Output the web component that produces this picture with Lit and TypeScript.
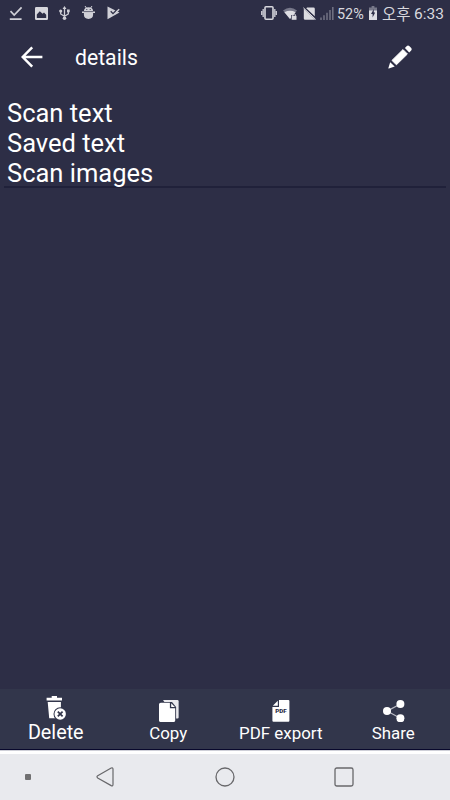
import { LitElement, html, css, svg } from "lit";
import { customElement, property } from "lit/decorators.js";

const glyphs: Record<string, { w: number; h: number; art: unknown }> = {
  check: { w: 14, h: 16, art: svg`<path d="M1.5 6.2 5.2 10 12.6 2.4M.8 14.2H12.6" fill="none" stroke="#cfcfd6" stroke-width="1.7"/>` },
  image: { w: 13, h: 13, art: svg`<path fill-rule="evenodd" fill="#d6d6dc" d="M1.2 0H11.8Q13 0 13 1.2V11.8Q13 13 11.8 13H1.2Q0 13 0 11.8V1.2Q0 0 1.2 0ZM1.8 11H11.2V7.8L9 5.5 7.6 6.8 4.8 4.2 1.8 7.6Z"/>` },
  usb: { w: 11, h: 14, art: svg`<g fill="none" stroke="#cfcfd6" stroke-width="1.3"><path d="M5.5 2V12M1.7 5V8L5.5 10.3 9.3 8V5"/></g><g fill="#cfcfd6"><path d="M5.5 0 7.5 3H3.5ZM8 3.5H10.7V6.3H8Z"/><circle cx="1.7" cy="5" r="1.6"/><circle cx="5.5" cy="12.2" r="1.8"/></g>` },
  robot: { w: 13, h: 14, art: svg`<g fill="#d0d0d7"><path d="M1.9 5.2Q2 1.2 6.5 1.2T11.1 5.2ZM1.9 6.2H11.1V8.6Q11.1 12.9 6.5 12.9T1.9 8.6ZM0 5.5H13V7H0Z"/><path d="M3 0 4.6 2.4M10 0 8.4 2.4" stroke="#d0d0d7"/></g><path d="M2 5.6H11" stroke="#2d2e46" stroke-width=".5"/><g fill="#2d2e46"><circle cx="4.8" cy="3.5" r=".6"/><circle cx="8.2" cy="3.5" r=".6"/></g>` },
  play: { w: 13, h: 14, art: svg`<path d="M.5 .5 12.5 6.6.5 13.2Z" fill="#d0d0d7"/><path d="M3.7 5.2 6 7.6 10.8 2.8" fill="none" stroke="#2d2e46" stroke-width="1.3"/><path d="M9.3 6 12.2 3.2" stroke="#d0d0d7" stroke-width="1.4"/>` },
  vibrate: { w: 16, h: 14, art: svg`<rect x="4" y=".8" width="8" height="12.4" rx="1" fill="none" stroke="#d6d6dc" stroke-width="1.6"/><path d="M2.2 3V11M13.8 3V11M.6 5V9M15.4 5V9" stroke="#c5c5ce" stroke-width="1.4"/>` },
  wifi: { w: 14, h: 13, art: svg`<path d="M0 3.5Q7-2 14 3.5L7 12Z" fill="#77788a"/><path d="M1.4 5.2Q7 2.4 12.6 5.2L7 12Z" fill="#dedee3"/><path d="M8 8.2H14V13H8Z" fill="#2d2e46"/><path d="M8.7 8.8H13.5V12.8H8.7Z" fill="#dadae0"/><path d="M9.8 8.9V7.6Q11.1 6.1 12.4 7.6V8.9" fill="none" stroke="#dadae0"/>` },
  nosim: { w: 13, h: 13, art: svg`<path d="M4.2.5H10.4Q11.8.5 11.8 1.8V9.2L3.2 1.3ZM.8 1.6 12.2 12.7H2.2Q.8 12.7.8 11.4Z" fill="#dcdce1"/><path d="M.4.8 12.6 12.4" stroke="#dcdce1" stroke-width="1"/>` },
  signal: { w: 14, h: 13, art: svg`<path d="M1 10.5V13M4 8.3V13M7 5.7V13M10 3V13M12.8 0V13" stroke="#6e6f80" stroke-width="1.6"/>` },
  battery: { w: 8, h: 14, art: svg`<path d="M2.6 0H5.4V1.4H8V5H0V1.4H2.6Z" fill="#777889"/><path d="M0 4.5H8V14H0Z" fill="#dedee3"/><path d="M4.8 3 2 8H3.6V11.5L6.2 6.6H4.8Z" fill="#2d2e46"/>` },
  back: { w: 22, h: 22, art: svg`<path d="M11.2 1.3 1.7 11 11.2 20.7M2 11H21.4" fill="none" stroke="#fff" stroke-width="2.5"/>` },
  pencil: { w: 24, h: 24, art: svg`<g fill="#fff"><path d="M4 15.4 15 4.6 19.4 9 8.4 19.8Z" stroke="#fff" stroke-width="1"/><path d="M2.2 17.3 6.7 21.6.9 23.5Q.2 23.6.4 22.9Z"/><path d="M16.9 3.1 18.6 1.3Q20-.1 21.5 1.3L23 2.8Q24.4 4.4 23 5.7L21.2 7.4Z"/></g>` },
  trash: { w: 20, h: 24, art: svg`<path d="M5.7 0H11V1.7H16V4.6H.6V1.7H5.7ZM1.7 6H14.9V22.3H3.2Z" fill="#fff"/><circle cx="14.2" cy="18" r="6.7" fill="#32364b"/><circle cx="14.2" cy="18" r="5.7" fill="#fff"/><path d="M11.8 15.6 16.6 20.4M16.6 15.6 11.8 20.4" stroke="#32364b" stroke-width="1.7"/>` },
  copy: { w: 20, h: 22, art: svg`<path d="M4 0H18.5Q19.6 0 19.6 1.3V17.5Q19.6 18.6 18.6 18.6H17" fill="#e9e9ed"/><path d="M2.5 2H13L17.1 7V22H0V4Q0 2 2.5 2Z" fill="#32364b"/><path d="M1.8 2.7H10.9V8.2H16.2V20.6Q16.2 22 15 22H1.3Q0 22 0 20.6V4.2Q0 2.7 1.8 2.7ZM12.2 3.2 15.9 6.9H12.2Z" fill="#fff"/>` },
  pdf: { w: 18, h: 22, art: svg`<path d="M7 0H16.4Q17.4 0 17.4 1V20.8Q17.4 21.8 16.4 21.8H1.5Q.4 21.8.4 20.8V7H7Z" fill="#fff"/><path d="M5.8.8V5.8H.8Z" fill="#fff"/><text x="9" y="12.9" font-family="Roboto, sans-serif" font-size="4.6" font-weight="900" textLength="11.5" lengthAdjust="spacingAndGlyphs" text-anchor="middle" fill="#292b43">PDF</text>` },
  share: { w: 22, h: 22, art: svg`<path d="M17.4 4 4 11.1 17.4 18.3" fill="none" stroke="#b9bac4" stroke-width="1.2"/><g fill="#fff"><circle cx="17.4" cy="4" r="4"/><circle cx="4" cy="11.1" r="4"/><circle cx="17.4" cy="18.3" r="4"/></g>` },
  navBack: { w: 18, h: 20, art: svg`<path d="M15.2 1 1.7 8.7Q.2 9.8 1.7 10.9L15.2 18.6Q17 19.3 17 17.5V2.1Q17 .3 15.2 1Z" fill="none" stroke="#68686b" stroke-width="1.2"/>` },
  navHome: { w: 20, h: 20, art: svg`<circle cx="10" cy="10" r="9" fill="none" stroke="#68686b" stroke-width="1.3"/>` },
  navRecent: { w: 20, h: 20, art: svg`<rect x="1" y="1" width="18" height="18" rx="1.8" fill="none" stroke="#68686b" stroke-width="1.3"/>` },
};

@customElement("line-icon")
export class LineIcon extends LitElement {
  @property() name = "check";
  static styles = css`
    :host { display: block; flex: none; }
    svg { display: block; }
  `;
  render() {
    const g = glyphs[this.name];
    return html`<svg width=${g.w} height=${g.h} viewBox="0 0 ${g.w} ${g.h}">${g.art}</svg>`;
  }
}

const actions = [
  { icon: "trash", label: "Delete", kind: "large" },
  { icon: "copy", label: "Copy", kind: "" },
  { icon: "pdf", label: "PDF export", kind: "" },
  { icon: "share", label: "Share", kind: "" },
];

@customElement("app-root")
export class AppRoot extends LitElement {
  static styles = css`
    :host {
      display: flex; flex-direction: column; width: 450px; height: 800px;
      overflow: hidden; background: #2d2e46; color: #fff;
      font-family: Roboto, "Noto Sans CJK KR", sans-serif;
    }
    * { box-sizing: border-box; }
    .status {
      height: 27px; display: flex; align-items: center; flex: none;
      padding: 0 7px 0 9px; color: #d8d8de; line-height: 27px; white-space: nowrap;
    }
    .notices { display: flex; align-items: center; gap: 11.7px; margin-top: -1px; }
    .system { display: flex; align-items: center; margin-left: auto; }
    .system line-icon { margin-right: 6px; margin-top: -1px; }
    .system .sim { margin-right: 4px; }
    .system .bars { margin-right: 3px; }
    .percent { width: 27px; margin-right: 5px; padding-top: 1px; font-size: 14.4px; }
    .system .cell { margin-right: 5px; }
    .period { width: 28px; margin-right: 4px; padding-top: 4px; font-size: 15.5px; }
    .clock { width: 29px; padding-top: 2px; font-size: 15.5px; }
    .header { height: 61px; flex: none; display: flex; align-items: center; padding: 0 38px 2px 21px; }
    .title { margin: 3px auto 0 32px; font-size: 21.2px; font-weight: 400; line-height: 30px; }
    .note {
      flex: none; height: 100px; margin: 0 4px; padding: 10px 3px 0;
      border-bottom: 2px solid #20213a; font-size: 25.5px; line-height: 30px;
    }
    .actions {
      flex: none; margin-top: auto; height: 61px; display: grid; grid-template-columns: repeat(4, 1fr);
      background: #32364b; border-bottom: 1px solid #08082c;
    }
    .action { display: flex; flex-direction: column; align-items: center; padding-top: 11px; }
    .label { font-size: 16.9px; line-height: 22px; white-space: nowrap; margin-left: -1px; }
    .large { padding-top: 7px; }
    .large .label { font-size: 19.8px; line-height: 26px; }
    .divider { flex: none; height: 4px; background: #fff; border-top: 1px solid #cfd0d8; }
    .nav { flex: none; height: 46px; background: #e9eaee; display: flex; align-items: center; padding-left: 25px; }
    .dot { width: 6px; height: 6px; background: #707071; border-radius: 1px; }
    .previous { margin-left: 65px; }
    .home { margin-left: 101px; }
    .recent { margin-left: 99px; }
  `;

  render() {
    return html`
      <div class="status">
        <div class="notices">
          ${["check", "image", "usb", "robot", "play"].map((n) => html`<line-icon name=${n}></line-icon>`)}
        </div>
        <div class="system">
          <line-icon name="vibrate"></line-icon>
          <line-icon name="wifi"></line-icon>
          <line-icon class="sim" name="nosim"></line-icon>
          <line-icon class="bars" name="signal"></line-icon>
          <span class="percent">52%</span>
          <line-icon class="cell" name="battery"></line-icon>
          <span class="period">오후</span>
          <span class="clock">6:33</span>
        </div>
      </div>
      <header class="header">
        <line-icon name="back"></line-icon>
        <h1 class="title">details</h1>
        <line-icon name="pencil"></line-icon>
      </header>
      <main class="note">
        ${["Scan text", "Saved text", "Scan images"].map((t) => html`<div>${t}</div>`)}
      </main>
      <div class="actions">
        ${actions.map((a) => html`<div class="action ${a.kind}">
          <line-icon name=${a.icon}></line-icon><span class="label">${a.label}</span>
        </div>`)}
      </div>
      <div class="divider"></div>
      <nav class="nav">
        <div class="dot"></div>
        <line-icon class="previous" name="navBack"></line-icon>
        <line-icon class="home" name="navHome"></line-icon>
        <line-icon class="recent" name="navRecent"></line-icon>
      </nav>
    `;
  }
}
